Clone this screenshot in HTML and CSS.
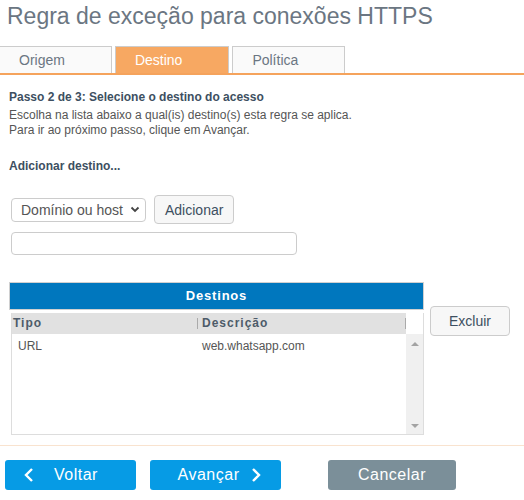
FILE: index.html
```html
<!DOCTYPE html>
<html lang="pt-BR">
<head>
  <meta charset="UTF-8" />
  <title>Regra de exceção para conexões HTTPS</title>
  <link rel="stylesheet" href="styles.css">
</head>
<body>
  <h1 class="title">Regra de exceção para conexões HTTPS</h1>

  <div class="tabs">
    <div class="tab">Origem</div>
    <div class="tab active">Destino</div>
    <div class="tab">Política</div>
  </div>

  <div class="content">
    <p class="step">Passo 2 de 3: Selecione o destino do acesso</p>
    <p class="hint">Escolha na lista abaixo a qual(is) destino(s) esta regra se aplica.<br>Para ir ao próximo passo, clique em Avançar.</p>
    <p class="add-label">Adicionar destino...</p>

    <div class="add-row">
      <div class="select">
        <span>Domínio ou host</span>
        <svg width="10" height="7" viewBox="0 0 10 7"><path d="M1.5 1.5 L5 5 L8.5 1.5" fill="none" stroke="#444" stroke-width="1.8"/></svg>
      </div>
      <button class="btn-light">Adicionar</button>
    </div>
    <div class="text-input"></div>

    <div class="list-row">
      <div class="grid">
        <div class="grid-title">Destinos</div>
        <div class="grid-box">
          <div class="grid-main">
            <div class="grid-head">
              <span class="col-tipo">Tipo</span>
              <span class="col-desc">Descrição</span>
            </div>
            <div class="grid-line">
              <span class="col-tipo">URL</span>
              <span class="col-desc">web.whatsapp.com</span>
            </div>
          </div>
          <div class="scrollbar">
            <div class="scroll-corner"></div>
            <div class="scroll-track">
              <span class="arrow up"></span>
              <span class="arrow down"></span>
            </div>
          </div>
        </div>
      </div>
      <button class="btn-light btn-excluir">Excluir</button>
    </div>
  </div>

  <div class="footer">
    <button class="btn btn-blue">
      <svg width="10" height="16" viewBox="0 0 10 16"><path d="M8 2 L2 8 L8 14" fill="none" stroke="#fff" stroke-width="2.4"/></svg>
      <span>Voltar</span>
    </button>
    <button class="btn btn-blue btn-next">
      <span>Avançar</span>
      <svg width="10" height="16" viewBox="0 0 10 16"><path d="M2 2 L8 8 L2 14" fill="none" stroke="#fff" stroke-width="2.4"/></svg>
    </button>
    <button class="btn btn-gray">Cancelar</button>
  </div>
</body>
</html>
```

FILE: styles.css
```css
body {
  margin: 0;
  font-family: "Liberation Sans", Arial, sans-serif;
  background: #fff;
  width: 524px;
}

.title {
  margin: 0;
  padding: 2px 7px 0;
  font-size: 23px;
  font-weight: normal;
  line-height: 28px;
  color: #6b7682;
}

/* abas */
.tabs {
  display: flex;
  gap: 3px;
  margin-top: 16px;
  border-bottom: 2px solid #f5a35c;
}
.tab {
  height: 26px;
  line-height: 27px;
  padding: 0 46px 0 19px;
  font-size: 14px;
  color: #6b7682;
  background: #fafafa;
  border: 1px solid #ccc;
  border-bottom: none;
  border-left: none;
}
.tab + .tab {
  border-left: 1px solid #ccc;
}
.tab.active {
  background: #f7a862;
  color: #fff;
}

.content {
  padding: 0 9px;
}
.step {
  margin: 15px 0 0;
  font-size: 12px;
  font-weight: bold;
  color: #3d4f61;
}
.hint {
  margin: 4px 0 0;
  font-size: 12px;
  line-height: 15px;
  color: #555;
}
.add-label {
  margin: 21px 0 0;
  font-size: 12px;
  font-weight: bold;
  color: #3d4f61;
}

.add-row {
  display: flex;
  align-items: center;
  gap: 8px;
  margin: 22px 0 0 2px;
}
.select {
  display: flex;
  align-items: center;
  justify-content: space-between;
  padding: 0 5px 0 9px;
  box-sizing: border-box;
  width: 135px;
  height: 24px;
  border: 1px solid #ccc;
  border-radius: 4px;
  font-size: 14px;
  color: #555;
}
.btn-light {
  font-family: "Liberation Sans", Arial, sans-serif;
  background: #f7f7f7;
  border: 1px solid #ccc;
  border-radius: 4px;
  color: #3d4f61;
  font-size: 14px;
  height: 29px;
  padding: 0 10px;
}
.text-input {
  margin: 8px 0 0 2px;
  width: 286px;
  height: 23px;
  box-sizing: border-box;
  border: 1px solid #ccc;
  border-radius: 4px;
}

/* lista */
.list-row {
  display: flex;
  align-items: flex-start;
  gap: 6px;
  margin-top: 27px;
}
.grid {
  width: 415px;
}
.grid-title {
  height: 26px;
  line-height: 26px;
  background: #0077be;
  border: 1px solid #d0d0d0;
  color: #fff;
  font-size: 13px;
  font-weight: bold;
  letter-spacing: 0.8px;
  text-align: center;
}
.grid-box {
  display: flex;
  margin: 3px 0 0 2px;
  height: 121px;
  border: 1px solid #ddd;
  border-top: none;
}
.grid-main {
  flex: 1;
}
.grid-head {
  display: flex;
  height: 21px;
  line-height: 21px;
  background: #e1e1e1;
  font-size: 12px;
  font-weight: bold;
  letter-spacing: 1px;
  color: #4d5b69;
}
.grid-head .col-desc {
  border-left: 1px solid #aaa;
  border-right: 1px solid #aaa;
  height: 11px;
  line-height: 11px;
  margin-top: 5px;
}
.col-tipo {
  width: 184px;
  padding-left: 1px;
}
.col-desc {
  flex: 1;
  padding-left: 4px;
}
.grid-line {
  display: flex;
  height: 25px;
  line-height: 25px;
  font-size: 12px;
  color: #555;
}
.grid-line .col-tipo {
  padding-left: 6px;
  width: 179px;
}
.grid-line .col-desc {
  padding-left: 5px;
}
.scrollbar {
  width: 17px;
  display: flex;
  flex-direction: column;
}
.scroll-corner {
  height: 21px;
  background: #fff;
}
.scroll-track {
  flex: 1;
  background: #f0f0f0;
  display: flex;
  flex-direction: column;
  justify-content: space-between;
  align-items: center;
  padding: 8px 0 6px;
}
.arrow {
  width: 0;
  height: 0;
  border-left: 4px solid transparent;
  border-right: 4px solid transparent;
}
.arrow.up {
  border-bottom: 4px solid #a3a3a3;
}
.arrow.down {
  border-top: 4px solid #a3a3a3;
}
.btn-excluir {
  width: 80px;
  margin-top: 24px;
  height: 30px;
}

/* rodapé */
.footer {
  margin-top: 10px;
  border-top: 1px solid #f9e3cf;
  padding: 14px 5px;
  display: flex;
  gap: 14px;
}
.btn {
  font-family: "Liberation Sans", Arial, sans-serif;
  height: 30px;
  width: 131px;
  border: none;
  border-radius: 3px;
  color: #fff;
  font-size: 16px;
  letter-spacing: 0.5px;
  display: flex;
  align-items: center;
  justify-content: center;
  gap: 20px;
}
.btn-blue {
  background: #069be5;
}
.btn-blue:first-child {
  justify-content: flex-start;
  padding-left: 19px;
}
.btn-next {
  gap: 12px;
  padding-left: 14px;
}
.btn-gray {
  background: #7b8f99;
  width: 128px;
  margin-left: 33px;
}
```
